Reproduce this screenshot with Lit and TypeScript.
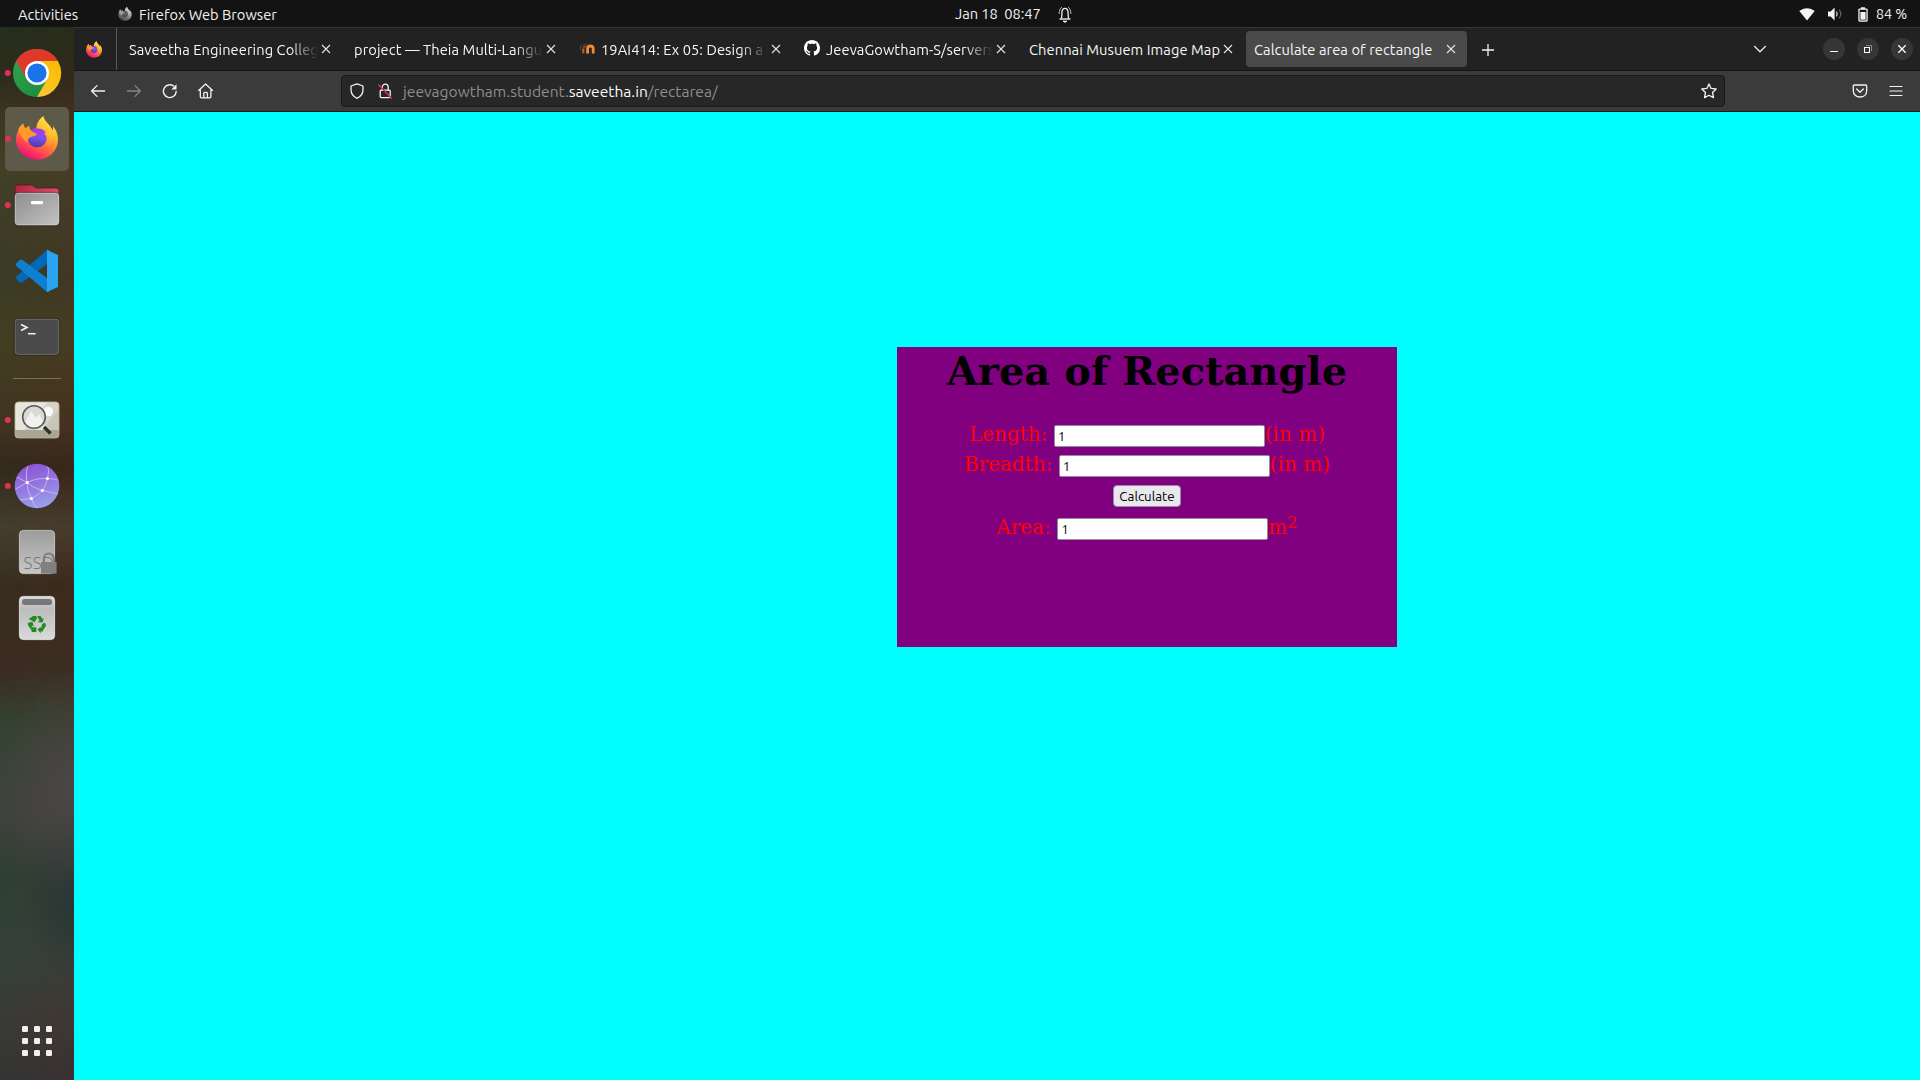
import { LitElement, html, css, svg, nothing, TemplateResult } from "lit";
import { customElement, property } from "lit/decorators.js";

const firefox = (id: string, gray = false) => html`
  <svg class="fx ${gray ? "gray" : ""}" viewBox="0 0 42 44">
    <defs>
      <linearGradient id="${id}a" x1="0.85" y1="0" x2="0.3" y2="1">
        <stop offset="0" stop-color="#fff44f" />
        <stop offset="0.3" stop-color="#ffc02e" />
        <stop offset="0.55" stop-color="#ff8030" />
        <stop offset="0.78" stop-color="#ff4055" />
        <stop offset="1" stop-color="#e80a80" />
      </linearGradient>
      <linearGradient id="${id}b" x1="0.6" y1="0" x2="0.4" y2="1">
        <stop offset="0" stop-color="#b036dc" />
        <stop offset="0.5" stop-color="#7a4ff0" />
        <stop offset="1" stop-color="#4a3aa0" />
      </linearGradient>
      <linearGradient id="${id}c" x1="0.8" y1="0" x2="0.4" y2="1">
        <stop offset="0" stop-color="#fff04a" />
        <stop offset="0.6" stop-color="#ffb52a" />
        <stop offset="1" stop-color="#ff7a30" stop-opacity="0" />
      </linearGradient>
    </defs>
    <path fill="url(#${id}a)" d="M7.2 7.5C7.6 10 8.5 11.4 9.6 12.4C10.6 11.2 11.8 10.4 13.3 10C13.1 11.8 13.6 13.3 14.8 14.6L20.5 13.5C20.6 8 23 3 27.4 .2C28 5.5 34.5 8.5 36.6 14.5C37.2 13.2 37.2 11.6 36.7 10C40 13.5 42 18 42 23.5C42 35 32.6 43.7 21 43.7C9.4 43.7 0 35 0 23.5C0 20 1 16.6 2.4 14.2C2.5 12 4.8 9.5 7.2 7.5Z" />
    <circle cx="21.2" cy="21.5" r="9.8" fill="url(#${id}b)" />
    <path fill="url(#${id}c)" d="M27.4 .2C22 4 20.2 9 20.8 12.8C25 12 29 14 30.5 17.5C29.5 17 28.5 17 28 17.2C32 20.5 31.5 28 27 31.5C35 31 39 24 37 16C35 9 28.4 6.5 27.4 .2Z" />
    <path fill="#ff9a28" d="M7.2 7.5C7.6 10 8.5 11.4 9.6 12.4C10.6 11.2 11.8 10.4 13.3 10C13.1 11.8 13.6 13.3 14.8 14.6C17 17 20 16.5 20.8 18.2C19.6 20.6 15.5 20.3 13.6 21.5C11.6 23 11.8 25 11.4 27C8 23 4 20 2.4 14.2C2.5 12 4.8 9.5 7.2 7.5Z" />
  </svg>`;

const closeX = html`<svg class="x" width="10" height="10" viewBox="0 0 10 10"><path d="M1 1L9 9M9 1L1 9" stroke="#e4e4e4" stroke-width="1.1" fill="none" /></svg>`;

const moodle = html`<svg class="fav" width="16" height="16" viewBox="0 0 16 16">
  <path d="M.6 5.2L7 3.2L9 4.5L3.2 6.4Z" fill="#3a3836" /><path d="M1.6 6V9.5" stroke="#5a4a3e" />
  <path d="M4.3 13.3V8.5" stroke="#b85f22" stroke-width="2.3" fill="none" />
  <path d="M8.6 13.6V8Q8.6 6 11.3 6T14.2 8.4V13.6" stroke="#f08c34" stroke-width="2.8" fill="none" />
  <path d="M4.3 8Q4.8 6.4 7.6 6.4" stroke="#8a4a20" stroke-width="1.6" fill="none" /></svg>`;

const github = html`<svg class="fav" width="16" height="16" viewBox="0 0 16 16"><path fill="#fff" d="M8 0C3.58 0 0 3.58 0 8c0 3.54 2.29 6.53 5.47 7.59.4.07.55-.17.55-.38 0-.19-.01-.82-.01-1.49-2.01.37-2.53-.49-2.69-.94-.09-.23-.48-.94-.82-1.13-.28-.15-.68-.52-.01-.53.63-.01 1.08.58 1.23.82.72 1.21 1.87.87 2.33.66.07-.52.28-.87.51-1.07-1.78-.2-3.64-.89-3.64-3.95 0-.87.31-1.59.82-2.15-.08-.2-.36-1.02.08-2.12 0 0 .67-.21 2.2.82.64-.18 1.32-.27 2-.27s1.36.09 2 .27c1.53-1.04 2.2-.82 2.2-.82.44 1.1.16 1.92.08 2.12.51.56.82 1.27.82 2.15 0 3.07-1.87 3.75-3.65 3.95.29.25.54.73.54 1.48 0 1.07-.01 1.93-.01 2.2 0 .21.15.46.55.38A8.01 8.01 0 0 0 16 8c0-4.42-3.58-8-8-8z" /></svg>`;

const stroked = (body: TemplateResult, cls = "") => html`<svg class="ico ${cls}" width="16" height="16" viewBox="0 0 16 16">${body}</svg>`;

@customElement("top-bar")
class TopBar extends LitElement {
  static styles = css`
    :host { display: grid; grid-template-columns: 1fr auto 1fr; height: 27px; background: #131313; color: #f2f2f2;
      font: 14.667px/27px "Ubuntu", "Noto Sans", sans-serif; white-space: pre; }
    .left { display: flex; align-items: center; padding-left: 18px; }
    .act { width: 100px; }
    .app { padding-left: 7px; }
    .fx { width: 14px; height: 14px; }
    .gray { filter: grayscale(1) brightness(0.95); }
    .mid { display: flex; align-items: center; padding-left: 107px; gap: 16px; }
    .clock { width: 87px; margin-top: -1px; letter-spacing: -0.05px; }
    .right { display: flex; align-items: center; justify-content: flex-end; padding-right: 13px; }
    .wifi { margin-right: 12px; }
    .vol { margin-right: 15px; }
    .bat { margin-right: 8px; }
    .pct { width: 31px; padding-top: 1px; font-size: 14.2px; }
  `;
  render() {
    return html`
      <div class="left"><span class="act">Activities</span>${firefox("g", true)}<span class="app">Firefox Web Browser</span></div>
      <div class="mid"><span class="clock">Jan 18  08:47</span>
        <svg width="14" height="17" viewBox="0 0 14 17" fill="none" stroke="#eee"><path d="M1.5 13H12.5" stroke-width="1.4" /><path d="M3.3 12.6C4 10.5 3.8 8 4 6C4.2 3.6 5.5 2.4 7 2.4S9.8 3.6 10 6C10.2 8 10 10.5 10.7 12.6" stroke-width="1.3" /><path d="M5 15.1H9L7 16.4Z" fill="#eee" stroke-width=".8" /><path d="M4 1C2 2 1.2 5 1.1 8M10 1C12 2 12.8 5 12.9 8" stroke="#b5b5b5" stroke-width="1" /></svg>
      </div>
      <div class="right">
        <svg class="wifi" width="16" height="14" viewBox="0 0 16 14"><path fill="#f4f4f4" d="M.3 4.1C4.6 .2 11.4 .2 15.7 4.1L8 13.4Z" /></svg>
        <svg class="vol" width="16" height="14" viewBox="0 0 16 14"><path fill="#f4f4f4" d="M1 4.6H3.6L7.6 .6V13.4L3.6 9.4H1Z" /><path d="M9.4 4.6Q11 7 9.4 9.4" stroke="#ddd" fill="none" stroke-width="1.2" /><path d="M12 2.6Q15.6 7 12 11.4" stroke="#666" fill="none" stroke-width="1.2" /></svg>
        <svg class="bat" width="10" height="15" viewBox="0 0 10 15"><path d="M3 .3H7V1.5H8.4Q9.7 1.5 9.7 2.8V13.3Q9.7 14.7 8.4 14.7H1.6Q.3 14.7 .3 13.3V2.8Q.3 1.5 1.6 1.5H3Z" fill="#f2f2f2" /><path d="M1.6 2.8H8.4V13.4H1.6Z" fill="#131313" /><rect x="2.4" y="5" width="5.2" height="7.7" fill="#f2f2f2" /></svg>
        <span class="pct">84 %</span>
      </div>`;
  }
}

interface Tab { title: string; icon?: TemplateResult; active?: boolean; }

@customElement("tab-strip")
class TabStrip extends LitElement {
  static styles = css`
    :host { display: flex; box-sizing: border-box; height: 44px; background: #222; border-top: 1px solid #363636; border-bottom: 1px solid #151515;
      font: 14.667px/36px "Ubuntu", "Noto Sans", sans-serif; color: #f6f6f6; }
    .pin { box-sizing: border-box; width: 43px; padding: 13px 0 0 12px; border-right: 1px solid #5a5a5a; margin-right: 2px; }
    .fx { display: block; width: 16px; height: 17px; }
    .tab { display: flex; align-items: center; box-sizing: border-box; width: 221px; height: 36px; margin: 3px 2px 0; padding-left: 8px; border-radius: 4px; }
    .active { background: #4a4a4a; }
    .fav { flex: none; margin: -2px 6px 0 0; }
    .title { flex: 1; overflow: hidden; white-space: nowrap; padding-top: 1px; letter-spacing: 0.08px;
      mask-image: linear-gradient(to left, transparent 0, #000 28px); }
    .full { mask-image: none; overflow: visible; }
    .x { flex: none; margin: 0 11px 1px 3px; }
    .plus { margin: 15px 0 0 12px; }
    .spacer { flex: 1; }
    .all { margin: 17px 50px 0 0; }
    .win { display: grid; place-items: center; width: 22px; height: 22px; margin: 10px 6px 0; border-radius: 50%; background: #363636; }
    .last { margin-right: 7px; }
  `;
  tabs: Tab[] = [
    { title: "Saveetha Engineering Colleg" },
    { title: "project — Theia Multi-Langua" },
    { title: "19AI414: Ex 05: Design a W", icon: moodle },
    { title: "JeevaGowtham-S/servers", icon: github },
    { title: "Chennai Musuem Image Map" },
    { title: "Calculate area of rectangle", active: true },
  ];
  render() {
    return html`
      <div class="pin">${firefox("p")}</div>
      ${this.tabs.map((t, i) => html`<div class="tab ${t.active ? "active" : ""}">${t.icon ?? nothing}<span class="title ${i > 3 ? "full" : ""}">${t.title}</span>${closeX}</div>`)}
      <svg class="plus" width="14" height="14" viewBox="0 0 14 14"><path d="M7 1V13M1 7H13" stroke="#f2f2f2" stroke-width="1.3" /></svg>
      <span class="spacer"></span>
      <svg class="all" width="14" height="9" viewBox="0 0 14 9"><path d="M1.2 1L7 6.8L12.8 1" stroke="#e8e8e8" stroke-width="1.3" fill="none" /></svg>
      <span class="win"><svg width="10" height="10" viewBox="0 0 10 10"><path d="M1 7.5H9" stroke="#fff" /></svg></span>
      <span class="win"><svg width="10" height="10" viewBox="0 0 10 10" fill="none"><rect x="1.5" y="3.5" width="5" height="5" stroke="#fff" /><path d="M3 1.5H8.5V7" stroke="#888" /></svg></span>
      <span class="win last"><svg width="10" height="10" viewBox="0 0 10 10"><path d="M1.3 1.3L8.7 8.7M8.7 1.3L1.3 8.7" stroke="#fff" stroke-width="1.3" /></svg></span>`;
  }
}

@customElement("nav-bar")
class NavBar extends LitElement {
  static styles = css`
    :host { display: flex; align-items: center; box-sizing: border-box; height: 41px; padding: 0 16px; background: #3b3b3b; border-bottom: 1px solid #181818;
      font: 15.6px/30px "Ubuntu", "Noto Sans", sans-serif; }
    .ico { flex: none; fill: none; stroke: #f2f2f2; stroke-width: 1.3; stroke-linecap: round; stroke-linejoin: round; }
    .btns { display: flex; gap: 20px; width: 251px; }
    .dim { stroke: #858585; }
    .url { display: flex; align-items: center; box-sizing: border-box; width: 1384px; height: 32px; padding: 0 7px; border: 1px solid #191919; border-radius: 4px; background: #272727; }
    .lock { margin: 0 10px 0 12px; }
    .addr { flex: 1; color: #8e8e8e; white-space: nowrap; }
    .host { color: #fafafa; }
    .end { display: flex; gap: 20px; margin-left: auto; }
  `;
  render() {
    return html`
      <div class="btns">
        ${stroked(svg`<path d="M14.6 8H1.6M7 2.6L1.6 8L7 13.4" />`)}
        ${stroked(svg`<path d="M1.4 8H14.4M9 2.6L14.4 8L9 13.4" />`, "dim")}
        ${stroked(svg`<path d="M14.2 8.5A6.4 6.4 0 1 1 11.6 3" stroke-width="1.4" /><path d="M14.5 1.2V6.4H9.3Z" fill="#f2f2f2" stroke="none" />`)}
        ${stroked(svg`<path d="M.6 7.4L7.6 1L14.6 7.4M2.3 6.2V13.6Q2.3 14.8 3.6 14.8H11.6Q12.9 14.8 12.9 13.6V6.2M5.8 14.6V10.4Q5.8 9.3 6.8 9.3H8.4Q9.4 9.3 9.4 10.4V14.6" />`)}
      </div>
      <div class="url">
        ${stroked(svg`<path d="M8 .8L14 3V6.6C14 11 11.6 13.8 8 15.3C4.4 13.8 2 11 2 6.6V3Z" />`)}
        ${stroked(svg`<rect x="3.2" y="7.2" width="10" height="7.4" rx="1" /><path d="M5.2 7V4.3A3 3.1 0 0 1 11.2 4.3V7" /><path d="M1.6 1.8L14.4 15.2" stroke="#e22850" stroke-width="1.5" />`, "lock")}
        <span class="addr">jeevagowtham.student.<span class="host">saveetha.in</span>/rectarea/</span>
        ${stroked(svg`<path d="M8 .9L10.1 5.4L15.2 6L11.5 9.5L12.5 14.6L8 12.2L3.5 14.6L4.5 9.5L.8 6L5.9 5.4Z" />`)}
      </div>
      <div class="end">
        ${stroked(svg`<path d="M2.4 2H13.6Q14.7 2 14.7 3.1V7.4C14.7 11.6 11.8 14 8 14S1.3 11.6 1.3 7.4V3.1Q1.3 2 2.4 2ZM4.7 6L8 9.2L11.3 6" />`)}
        ${stroked(svg`<path d="M2 3.5H14M2 8H14M2 12.5H14" stroke-width="1.2" />`)}
      </div>`;
  }
}

@customElement("app-dock")
class AppDock extends LitElement {
  static styles = css`
    :host { display: flex; flex-direction: column; box-sizing: border-box; width: 74px; padding-top: 13px;
      background:
        radial-gradient(70px 120px at 74px 765px, #4b4848cc 0, #4b484800 100%),
        radial-gradient(50px 90px at 74px 865px, #1e3134aa 0, #1e313400 100%),
        radial-gradient(50px 60px at 0 640px, #40211a66 0, #40211a00 100%),
        radial-gradient(60px 70px at 0 700px, #2c4a3366 0, #2c4a3300 100%),
        linear-gradient(90deg, #2e3a2233, #4a2c1833),
        linear-gradient(#202c1c 0, #2e281a 50px, #403422 90px, #464128 140px, #3d3a26 250px, #464022 310px, #443220 400px, #33251b 440px, #483f31 500px, #39291d 560px, #3a2d25 640px, #384032 690px, #414540 740px, #424443 790px, #2f4037 850px, #354340 930px, #3c3b3b 980px, #3a3839 1010px, #353238 1053px); }
    .item { display: block; flex: none; width: 74px; height: 66px; }
    .sep { flex: none; width: 48px; height: 1px; margin: 8px 13px; background: #77705e; }
    .slot { display: grid; grid-template-columns: 11px 1fr; align-items: center; box-sizing: border-box; width: 64px; height: 64px; margin: 1px 5px; background: #5e5a49; border-radius: 5px; }
    .slot .fx { display: block; width: 42px; height: 44px; margin-top: -2px; }
    .dot { width: 6px; height: 6px; border-radius: 50%; background: #e0334f; }
    .apps { margin: auto 0 24px 22px; display: block; }
  `;
  item(body: TemplateResult, running = false) {
    return html`<svg class="item" viewBox="0 0 74 66">${running ? svg`<circle cx="7.8" cy="33" r="3" fill="#e0334f" />` : nothing}${body}</svg>`;
  }
  render() {
    return html`
      ${this.item(svg`
        <defs><linearGradient id="cg" x1="0" y1="0" x2=".5" y2="1"><stop offset="0" stop-color="#34a853" /><stop offset="1" stop-color="#1e8e3e" /></linearGradient>
        <linearGradient id="cy" x1="0" y1="1" x2=".6" y2="0"><stop offset="0" stop-color="#fcc934" /><stop offset="1" stop-color="#fbbc04" /></linearGradient></defs>
        <circle cx="37" cy="33" r="24" fill="url(#cg)" />
        <path d="M16.2 21A24 24 0 0 1 57.8 21H37L26.6 39Z" fill="#e0382b" />
        <path d="M57.8 21A24 24 0 0 1 37 57L47.4 39L37 21Z" fill="url(#cy)" />
        <circle cx="37" cy="33" r="12" fill="#fff" /><circle cx="37" cy="33" r="9.6" fill="#1a73e8" />`, true)}
      <div class="slot"><span class="dot"></span>${firefox("d")}</div>
      ${this.item(svg`
        <defs><linearGradient id="fr" x1="0" y1="0" x2="1" y2="0"><stop offset="0" stop-color="#b5233f" /><stop offset="1" stop-color="#d9506b" /></linearGradient>
        <linearGradient id="fgz" x1="0" y1="0" x2="1" y2="1"><stop offset="0" stop-color="#8e8e8e" /><stop offset="1" stop-color="#c2c2c2" /></linearGradient></defs>
        <path d="M15 16Q15 13 18 13H31.5Q33 13 34 14.5T36.5 16H56Q59 16 59 19V30H15Z" fill="url(#fr)" stroke="#5b1522" stroke-width=".8" />
        <rect x="15" y="21" width="44" height="32" rx="3.5" fill="url(#fgz)" stroke="#d6d6d6" stroke-width=".9" />
        <rect x="14.4" y="20.4" width="45.2" height="33.4" rx="4" fill="none" stroke="#2a2620" stroke-width=".6" />
        <rect x="31" y="29" width="12" height="3.2" rx="1" fill="#fff" />`, true)}
      ${this.item(svg`
        <path d="M47 12L58 17V49L47 54Z" fill="#29a4f0" />
        <path d="M16 40.5L20 44.5Q21 45.3 22.5 44.2L47 26V12L16.3 38.5Q15.5 39.5 16 40.5Z" fill="#0169b5" />
        <path d="M16 25.5L20 21.8Q21 21 22.5 22L47 40V54L16.3 28Q15.2 26.8 16 25.5Z" fill="#0f80d0" />
        <path d="M47 12L49 12.4V53.6L47 54Z" fill="#29a4f0" />`)}
      ${this.item(svg`
        <rect x="15" y="15" width="44" height="35.6" rx="3.5" fill="#4b4b4b" stroke="#7b7b7b" />
        <rect x="14.3" y="14.3" width="45.4" height="37" rx="4" fill="none" stroke="#24201a" stroke-width=".7" />
        <path d="M21 20.5L27 23.5L21 26.5" stroke="#f4f4f4" stroke-width="1.6" fill="none" /><path d="M28 29.7H35.6" stroke="#f4f4f4" stroke-width="1.5" />`)}
      <div class="sep"></div>
      ${this.item(svg`
        <defs><clipPath id="iv"><rect x="15" y="15" width="44" height="36" rx="3.5" /></clipPath></defs>
        <g clip-path="url(#iv)"><path d="M15 15H59V51H15Z" fill="#e7e5dc" /><path d="M48 15H59V30L36 43H24Z" fill="#d5d2c6" /><path d="M59 22V43H42Z" fill="#c9c6b8" /><path d="M15 43H59V51H15Z" fill="#aaa594" /></g>
        <circle cx="48.2" cy="24.5" r="4.8" fill="#fafaf8" /><circle cx="34" cy="30" r="11" fill="#d9d9d5" />
        <path d="M24 37L31 24L36 31L39 27L44 37Q34 46 24 37Z" fill="#f1f1ef" />
        <circle cx="34" cy="30" r="11.3" fill="none" stroke="#585a5c" stroke-width="1.6" /><path d="M44 40L50.5 46.5" stroke="#2f2f2f" stroke-width="3.4" />
        <rect x="15" y="15" width="44" height="36" rx="3.5" fill="none" stroke="#b9b5a6" stroke-width=".8" />`, true)}
      ${this.item(svg`
        <defs><linearGradient id="gl" x1=".3" y1="0" x2=".6" y2="1"><stop offset="0" stop-color="#8c52d4" /><stop offset="1" stop-color="#99a0ec" /></linearGradient><clipPath id="gc"><circle cx="37" cy="33" r="22" /></clipPath></defs>
        <circle cx="37" cy="33" r="22.3" fill="url(#gl)" />
        <g clip-path="url(#gc)" stroke="#cdb9f4" stroke-width=".9" fill="none"><path d="M27 29.5Q25 18 29 10M27 29.5Q36 25 47.5 25.5T60 29M47.5 25.5Q50 18 47 10M27 29.5L15 23M27 29.5L14 37M27 29.5Q33 35 42.5 37.5T60 41M47.5 25.5Q47 31 42.5 37.5Q37 43 31.5 45.5L18 47M27 29.5Q27 38 31.5 45.5Q33 51 38 56" /></g>
        <g fill="#fff"><circle cx="27.3" cy="29.5" r="1.6" /><circle cx="47.4" cy="25.5" r="1.6" /><circle cx="42.4" cy="37.5" r="1.6" /><circle cx="31.4" cy="45.5" r="1.6" /></g>`, true)}
      ${this.item(svg`
        <defs><linearGradient id="sd" x1="0" y1="0" x2="0" y2="1"><stop offset="0" stop-color="#9c9c9c" /><stop offset="1" stop-color="#c6c6c6" /></linearGradient></defs>
        <rect x="19.4" y="11.4" width="35.2" height="43.2" rx="4" fill="url(#sd)" stroke="#d0d0d0" stroke-width=".8" />
        <text x="23.5" y="49.5" font-family="Open Sans, Noto Sans, sans-serif" font-weight="300" font-size="16.5" letter-spacing=".3" fill="#6c6c6c">SSD</text>
        <path d="M43.8 43V39.5A5 5 0 0 1 53.8 39.5V43" stroke="#7d7d7d" stroke-width="2.2" fill="none" /><rect x="41" y="43" width="15.6" height="11.6" fill="#808080" />`)}
      ${this.item(svg`
        <defs><linearGradient id="tr" x1="0" y1="0" x2="0" y2="1"><stop offset="0" stop-color="#d9d9d9" /><stop offset=".3" stop-color="#bcbcbc" /><stop offset="1" stop-color="#dadada" /></linearGradient></defs>
        <rect x="19.4" y="11.4" width="35.2" height="43.2" rx="4" fill="url(#tr)" stroke="#ececec" stroke-width=".8" />
        <rect x="22" y="14" width="30" height="6" rx="2.5" fill="#777" />
        <g fill="#228b22" transform="translate(0 .6)"><path d="M31.5 35L28.8 33.4L33 30.4H36L37.2 32.2L34.6 36.6Z" /><path d="M37.2 30.4H40.6L42.4 33.4L44 32.5L42.3 37L37.6 36.4L39.6 35.2Z" /><path d="M42.4 38.6L45.2 36.8L46.5 40L44.6 43L41.6 43Z" transform="translate(-.4 0)" /><path d="M37.6 43.8L40.6 40.9V42.4H44.2L42.6 46H40.6V48Z" /><path d="M30.4 41.6H36.4V46.4H31.8Z" /><path d="M27.6 37.4L32.4 36.2L33.8 41L32.2 40.2L30.4 43.4L28.2 40Z" /></g>`)}
      <svg class="apps" width="30" height="30" viewBox="0 0 30 30" fill="#f1f0ef">
        ${[0, 12, 24].map((y) => [0, 12, 24].map((x) => svg`<rect x=${x} y=${y} width="6" height="6" rx="1.2" />`))}
      </svg>`;
  }
}

@customElement("area-form")
class AreaForm extends LitElement {
  @property() length = "1";
  @property() breadth = "1";
  @property() area = "1";
  static styles = css`
    :host { display: block; width: 500px; height: 300px; background: #800080; color: #f00; font: 20px/24px "DejaVu Serif", serif; }
    .head { margin: 0; height: 75px; font-size: 40px; line-height: 47px; font-weight: 700; text-align: center; color: #000; }
    .row { display: flex; justify-content: center; height: 30px; white-space: pre; }
    .tall { height: 33px; }
    .field { box-sizing: border-box; width: 211px; height: 22px; margin: 3px 0 0; padding: 1px 3px 0; border: 1px solid #8f8f9d; border-radius: 2px; background: #fff; color: #000;
      font: 13.33px "Ubuntu", "Noto Sans", sans-serif; outline: none; }
    .calc { box-sizing: border-box; width: 68px; height: 22px; margin: 3px 0 0; padding: 1px 0 0; border: 1px solid #8f8f9d; border-radius: 4px; background: #e9e9ed; color: #000;
      font: 13.33px/19px "Ubuntu", "Noto Sans", sans-serif; }
    .sup { font-size: 16.67px; line-height: 0; vertical-align: 6px; }
  `;
  render() {
    return html`
      <h1 class="head">Area of Rectangle</h1>
      <div class="row"><span>Length: </span><input class="field" .value=${this.length} /><span>(in m)</span></div>
      <div class="row"><span>Breadth: </span><input class="field" .value=${this.breadth} /><span>(in m)</span></div>
      <div class="row tall"><button class="calc">Calculate</button></div>
      <div class="row"><span>Area: </span><input class="field" .value=${this.area} /><span>m<sup class="sup">2</sup></span></div>`;
  }
}

@customElement("app-root")
class AppRoot extends LitElement {
  static styles = css`
    :host { display: flex; flex-direction: column; width: 1920px; height: 1080px; overflow: hidden; background: #131313; }
    .body { display: flex; flex: 1; min-height: 0; }
    .window { display: flex; flex-direction: column; width: 1846px; }
    .page { flex: 1; background: #0ff; padding: 235px 0 0 823px; }
  `;
  render() {
    return html`
      <top-bar></top-bar>
      <div class="body">
        <app-dock></app-dock>
        <div class="window">
          <tab-strip></tab-strip>
          <nav-bar></nav-bar>
          <main class="page"><area-form></area-form></main>
        </div>
      </div>`;
  }
}
